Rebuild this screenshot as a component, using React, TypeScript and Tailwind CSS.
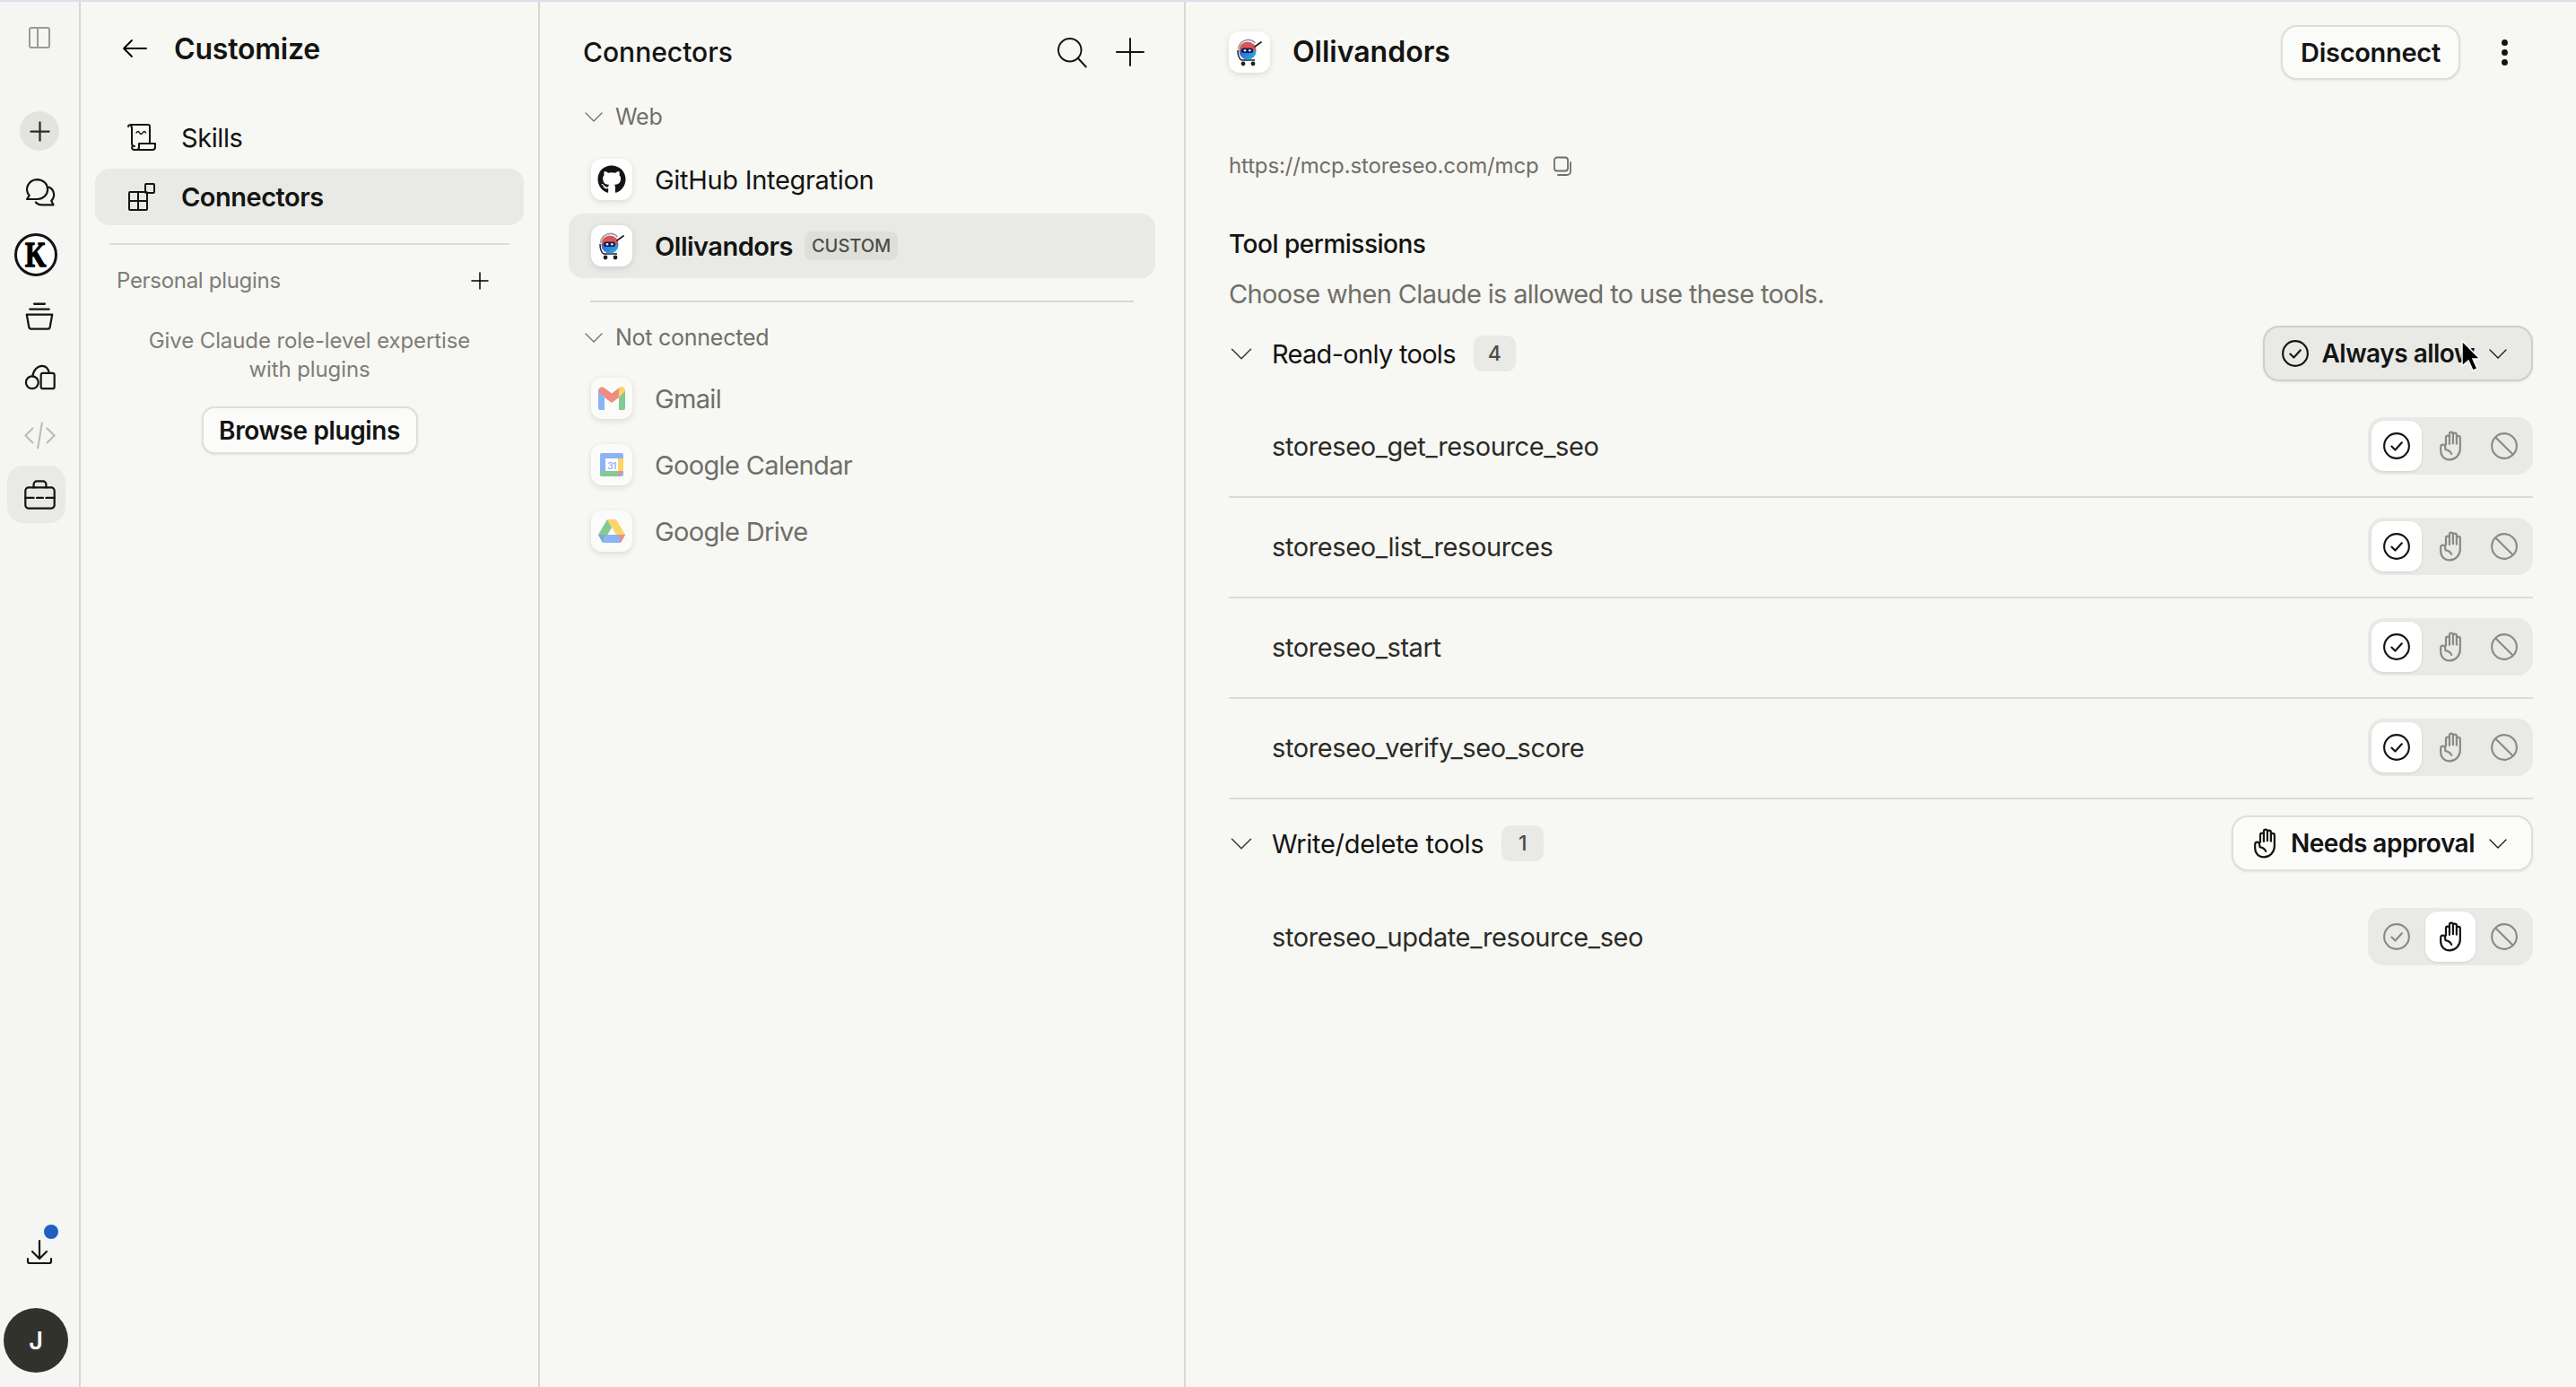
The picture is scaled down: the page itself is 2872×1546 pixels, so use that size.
import React from "react";
import { FaGithub } from "react-icons/fa";

const Stroke = ({ size = 30, box = 24, w = 1.7, className = "", children }: { size?: number; box?: number; w?: number; className?: string; children: React.ReactNode }) => (
  <svg width={size} height={size} viewBox={`0 0 ${box} ${box}`} fill="none" stroke="currentColor" strokeWidth={w} strokeLinecap="round" strokeLinejoin="round" className={className}>
    {children}
  </svg>
);

const Plus = ({ size = 30, w = 1.5 }: { size?: number; w?: number }) => (
  <Stroke size={size} w={w}><path d="M12 3v18M3 12h18" /></Stroke>
);

const Chevron = ({ size = 26 }: { size?: number }) => (
  <Stroke size={size} w={1.3}><path d="M3 8l9 9 9-9" /></Stroke>
);

const CheckCircle = ({ size = 32 }: { size?: number }) => (
  <Stroke size={size} w={1.6}>
    <circle cx="12" cy="12" r="10.4" />
    <path d="M7.8 12.4l3 3 5.6-6.2" />
  </Stroke>
);

const HandIcon = () => (
  <svg width="28" height="34" viewBox="2.2 1.2 16.2 22.3" fill="none" stroke="currentColor" strokeWidth="1.45" strokeLinecap="round" strokeLinejoin="round">
    <path d="M7 11.5V6.200a1.300 1.300 0 0 1 2.600 0V11M9.600 10.500V3.600a1.300 1.300 0 0 1 2.600 0v6.900M12.200 10.500V4.200a1.300 1.300 0 0 1 2.600 0v6.300M14.800 10.800V6.400a1.300 1.300 0 0 1 2.600 0V14.500a8 8 0 0 1-7.700 8C6 22.500 3.300 19.900 3.200 16v-3a1.600 1.600 0 0 1 3.200 0l.3 2c2 .3 3.600 1.300 4.400 3.200" />
  </svg>
);

const BlockIcon = ({ size = 32 }: { size?: number }) => (
  <Stroke size={size} w={1.6}>
    <circle cx="12" cy="12" r="10.4" />
    <path d="M4.800 4.800l14.400 14.400" />
  </Stroke>
);

const OllivandorsLogo = ({ size = 34 }: { size?: number }) => (
  <svg width={size} height={size} viewBox="0 0 34 34">
    <defs>
      <linearGradient id="ollBody" x1="0" y1="0" x2="1" y2="1">
        <stop offset="0" stopColor="#5a46b0" />
        <stop offset="0.55" stopColor="#2f7fe0" />
        <stop offset="1" stopColor="#27c0d8" />
      </linearGradient>
    </defs>
    <path d="M4.500 14a11 11 0 0 1 19-7" fill="none" stroke="#9a9a9a" strokeWidth="1.600" />
    <path d="M4 15c0 6 1 9 4 11h15" fill="none" stroke="#222" strokeWidth="1.500" />
    <circle cx="15" cy="16" r="9.500" fill="url(#ollBody)" />
    <path d="M5.500 15a9.500 9.500 0 0 1 19 0z" fill="#d9545a" />
    <rect x="8" y="12.500" width="13" height="5.500" rx="2.600" fill="#15204a" />
    <circle cx="12" cy="15.200" r="1.300" fill="#e8f0ff" />
    <circle cx="17.300" cy="15.200" r="1.300" fill="#e8f0ff" />
    <path d="M23 11l7-5" stroke="#222" strokeWidth="1.800" strokeLinecap="round" />
    <circle cx="10" cy="30" r="2.400" fill="#222" />
    <circle cx="21" cy="30" r="2.400" fill="#222" />
  </svg>
);

const GmailLogo = () => (
  <svg width="30" height="26" viewBox="0 0 30 26" className="opacity-60">
    <path d="M0 4v20a2 2 0 0 0 2 2h5V12z" fill="#4285f4" />
    <path d="M30 4v20a2 2 0 0 1-2 2h-5V12z" fill="#34a853" />
    <path d="M0 5c0-4 4-6 7-3.500l8 6 8-6c3-2.500 7-.5 7 3.500l-7 7-8 6-8-6z" fill="#ea4335" />
    <path d="M23 1.500c3-2 7-.5 7 3.500l-7 7z" fill="#fbbc04" />
  </svg>
);

const CalendarLogo = () => (
  <svg width="26" height="26" viewBox="0 0 26 26" className="opacity-60">
    <rect x="0" y="0" width="26" height="26" rx="2" fill="#4285f4" />
    <rect x="20" y="6" width="6" height="14" fill="#fbbc04" />
    <path d="M0 20h20v6H2a2 2 0 0 1-2-2z" fill="#34a853" />
    <path d="M20 20h6l-6 6z" fill="#ea4335" />
    <rect x="6" y="6" width="14" height="14" fill="#ffffff" />
    <text x="13" y="17.500" textAnchor="middle" fontSize="10" fontFamily="Inter, sans-serif" fontWeight="600" fill="#4285f4">31</text>
  </svg>
);

const DriveLogo = () => (
  <svg width="30" height="27" viewBox="0 0 30 27" className="opacity-60">
    <path d="M10 0h10l10 17h-10z" fill="#fbbc04" />
    <path d="M10 0L0 17l5 9 10-17z" fill="#34a853" />
    <path d="M5 26h20l5-9H10z" fill="#4285f4" />
    <path d="M25 26l5-9h-7z" fill="#ea4335" />
    <path d="M0 17l5 9 3-9z" fill="#2a6fd6" />
  </svg>
);

const LogoBox = ({ children, dim = false }: { children: React.ReactNode; dim?: boolean }) => (
  <div className={`flex h-[46px] w-[46px] shrink-0 items-center justify-center rounded-xl shadow-[0_2px_7px_rgba(0,0,0,0.12)] ${dim ? "bg-[#fbfbf9]" : "bg-white"}`}>
    {children}
  </div>
);

const RailSlot = ({ h, className = "", children }: { h: string; className?: string; children: React.ReactNode }) => (
  <div className={`flex w-full items-center justify-center ${h} ${className}`}>{children}</div>
);

const Rail = () => (
  <aside className="flex w-[90px] shrink-0 flex-col border-r-2 border-[#d8d8d3] bg-[#f5f5f3] text-[#141413]">
    <RailSlot h="h-[80px]" className="text-[#9b9b96]">
      <svg width="26" height="26" viewBox="0 0 26 26" fill="none" stroke="currentColor" strokeWidth="2">
        <rect x="2" y="2" width="22" height="22" rx="2" />
        <path d="M11 2v22" />
      </svg>
    </RailSlot>
    <RailSlot h="h-[64px]" className="mt-[32px]">
      <div className="flex h-[44px] w-[44px] items-center justify-center rounded-full bg-[#e4e4df] text-[#2b2b28]">
        <Plus size={27} w={2} />
      </div>
    </RailSlot>
    <RailSlot h="h-[72px]">
      <Stroke size={37} box={32} w={1.9}>
        <path d="M13.500 3.500a10 9.500 0 0 1 0 19H3.500l2.300-3.500A10 9.500 0 0 1 13.500 3.500z" />
        <path d="M25 11a8 8 0 0 1 2 13l2 4H18a8 8 0 0 1-6-2.500" />
      </Stroke>
    </RailSlot>
    <RailSlot h="h-[68px]">
      <div className="mr-2 flex h-[48px] w-[48px] items-center justify-center rounded-full border-[3px] border-[#141413] bg-white [font-family:'Liberation_Serif',serif] text-[40px] leading-none font-bold text-black">
        <span className="block scale-x-75 [-webkit-text-stroke:1.5px_black]">K</span>
      </div>
    </RailSlot>
    <RailSlot h="h-[70px]">
      <Stroke size={38} box={32} w={1.9}>
        <path d="M11 4h10M7 9h18M4 14h24l-2.200 12a2 2 0 0 1-2 1.500H8.200a2 2 0 0 1-2-1.500z" />
      </Stroke>
    </RailSlot>
    <RailSlot h="h-[64px]">
      <svg width="37" height="37" viewBox="0 2 32 32" fill="none" stroke="currentColor" strokeWidth="1.900" strokeLinecap="round" strokeLinejoin="round">
        <circle cx="8.500" cy="23" r="6" />
        <rect x="17" y="14" width="13" height="15" rx="2" />
        <path d="M9 17c.5-6 5-10 9-10 3 0 6 2 7 7" />
      </svg>
    </RailSlot>
    <RailSlot h="h-[66px]" className="text-[#bdbdb8]">
      <Stroke size={37} box={32} w={1.9}>
        <path d="M9 9l-7 7 7 7M23 9l7 7-7 7M18 4l-4 24" />
      </Stroke>
    </RailSlot>
    <RailSlot h="h-[66px]">
      <div className="mr-[7px] flex h-[64px] w-[65px] items-center justify-center rounded-[18px] bg-[#e9e9e5] pl-[7px]">
        <Stroke size={37} box={32} w={1.9}>
          <rect x="2" y="9" width="28" height="20" rx="3" />
          <path d="M10 9V6a3 3 0 0 1 3-3h6a3 3 0 0 1 3 3v3M2 19h8M13 19h6M22 19h8" />
        </Stroke>
      </div>
    </RailSlot>
    <div className="relative mt-auto flex h-[40px] w-full items-center justify-center">
      <Stroke size={30} box={30} w={2.2}>
        <path d="M15 2v20M7 14l8 8 8-8M2 22v3a2 2 0 0 0 2 2h22a2 2 0 0 0 2-2v-3" />
      </Stroke>
      <span className="absolute top-[-11px] left-[49px] h-[16px] w-[16px] rounded-full bg-[#1f5fc4]" />
    </div>
    <div className="mt-[42px] mb-[16px] flex w-full justify-center">
      <div className="mr-2 flex h-[72px] w-[72px] items-center justify-center rounded-full bg-[#32322d] text-[27px] font-semibold text-white">J</div>
    </div>
  </aside>
);

const Sidebar = () => (
  <section className="flex w-[512px] shrink-0 flex-col border-r-2 border-[#d8d8d3] px-4">
    <div className="flex h-[104px] items-center gap-[30px] pl-[30px]">
      <Stroke size={28} box={28} w={1.8}><path d="M27 14H2M11 5l-9 9 9 9" /></Stroke>
      <h1 className="pt-[1px] text-[32px] font-semibold tracking-[-0.2px] text-[#141413]">Customize</h1>
    </div>
    <div className="mt-[15px] mb-[4px] flex h-[63px] items-center gap-[28px] rounded-2xl pl-[36px] text-[29px] tracking-[-0.4px] text-[#141413]">
      <Stroke size={32} box={32} w={2}>
        <path d="M1 4c0-2 2-2 3-1l1 2v18a3 3 0 0 0 3 3M4 2h19a2 2 0 0 1 2 2v19M8 30a3 3 0 0 1-3-3M8 30h20a3 3 0 0 0 3-3v-4H13v4a3 3 0 0 1-3 3" />
        <path d="M10 11c1.500-2 2.500-2 3.500 0s2 2 3.500 0 2.500-2 3.500 0" strokeWidth="1.500" />
      </Stroke>
      <span className="pt-[2px]">Skills</span>
    </div>
    <div className="flex h-[63px] items-center gap-[28px] rounded-2xl bg-[#e9e9e5] pl-[36px] text-[29px] font-semibold tracking-[-0.5px] text-[#141413]">
      <Stroke size={32} box={32} w={2}>
        <rect x="2" y="10" width="20" height="20" rx="1" />
        <path d="M12 10v20M2 20h20" />
        <rect x="20" y="1" width="10" height="10" rx="1" />
      </Stroke>
      Connectors
    </div>
    <div className="mx-4 mt-[20px] h-[2px] bg-[#dcdcd7]" />
    <div className="mt-[20px] flex h-[40px] items-center justify-between pr-[37px] pl-6">
      <span className="text-[24px] tracking-[-0.3px] text-[#7d7d78]">Personal plugins</span>
      <Plus size={24} />
    </div>
    <p className="mt-[31px] text-center text-[24px] leading-[32px] tracking-[-0.1px] text-[#7d7d78]">
      Give Claude role-level expertise
      <br />
      with plugins
    </p>
    <button className="mt-[25px] h-[53px] w-[241px] self-center rounded-[14px] border-2 border-[#dededa] bg-[#fbfbf9] text-[28px] font-semibold tracking-[-0.4px] text-[#141413] shadow-[0_1px_3px_rgba(0,0,0,0.08)]">
      Browse plugins
    </button>
  </section>
);

const SectionLabel = ({ label }: { label: string }) => (
  <div className="flex h-[32px] items-center gap-[12px] pl-4 text-[25px] tracking-[-0.25px] text-[#6f6f69]">
    <Chevron size={24} />
    {label}
  </div>
);

const ConnectorRow = ({ logo, name, active = false, dim = false, badge }: { logo: React.ReactNode; name: string; active?: boolean; dim?: boolean; badge?: string }) => (
  <div className={`mb-[2px] flex h-[72px] items-center gap-[25px] rounded-2xl pl-[25px] text-[29px] ${active ? "bg-[#e9e9e5] font-semibold tracking-[-0.5px] text-[#141413]" : dim ? "tracking-[-0.65px] text-[#6f6f69]" : "tracking-[-0.3px] text-[#141413]"}`}>
    <LogoBox dim={dim}>{logo}</LogoBox>
    <span>{name}</span>
    {badge && (
      <span className="-ml-[12px] flex h-[32px] items-center rounded-lg bg-[#dfdfda] px-[8px] text-[20px] font-medium tracking-normal text-[#4d4d48]">
        {badge}
      </span>
    )}
  </div>
);

const ConnectorList = () => (
  <section className="flex w-[720px] shrink-0 flex-col border-r-2 border-[#d8d8d3] px-8">
    <div className="flex h-[112px] items-center justify-between pr-[10px] pl-4 text-[#141413]">
      <h2 className="text-[30px] font-medium">Connectors</h2>
      <div className="flex items-center gap-[29px]">
        <Stroke size={36} box={24} w={1.3}>
          <circle cx="10.500" cy="10.500" r="8.500" />
          <path d="M16.500 16.500l6 6.500" />
        </Stroke>
        <Stroke size={36} box={24} w={1.3}><path d="M12 2v20M2 12h20" /></Stroke>
      </div>
    </div>
    <SectionLabel label="Web" />
    <div className="mt-[18px]">
      <ConnectorRow logo={<FaGithub className="text-[32px] text-[#141413]" />} name="GitHub Integration" />
      <ConnectorRow logo={<OllivandorsLogo />} name="Ollivandors" active badge="CUSTOM" />
    </div>
    <div className="mx-6 mt-[23px] h-[2px] bg-[#d8d8d3]" />
    <div className="mt-[23px]">
      <SectionLabel label="Not connected" />
    </div>
    <div className="mt-[16px]">
      <ConnectorRow logo={<GmailLogo />} name="Gmail" dim />
      <ConnectorRow logo={<CalendarLogo />} name="Google Calendar" dim />
      <ConnectorRow logo={<DriveLogo />} name="Google Drive" dim />
    </div>
  </section>
);

const PermissionToggle = ({ mode }: { mode: "allow" | "ask" }) => {
  const slot = "flex h-[56px] w-[56px] items-center justify-center rounded-[14px]";
  const on = "bg-white text-[#141413] shadow-[0_1px_3px_rgba(0,0,0,0.1)]";
  const off = "text-[#8a8a85]";
  return (
    <div className="flex h-[64px] w-[184px] items-center gap-[4px] rounded-[18px] bg-[#e9e9e5] px-[4px]">
      <div className={`${slot} ${mode === "allow" ? on : off}`}><CheckCircle /></div>
      <div className={`${slot} ${mode === "ask" ? on : off}`}><HandIcon /></div>
      <div className={`${slot} ${off}`}><BlockIcon /></div>
    </div>
  );
};

const ToolRow = ({ name, mode, last = false }: { name: string; mode: "allow" | "ask"; last?: boolean }) => (
  <div className={`flex h-[112px] items-center justify-between pb-[2px] pl-[48px] text-[29px] tracking-[-0.4px] text-[#2b2b28] ${last ? "" : "border-b-2 border-[#dcdcd7]"}`}>
    <span>{name}</span>
    <PermissionToggle mode={mode} />
  </div>
);

const GroupHeader = ({ title, titleClass, count, icon, label, open = false, className = "" }: { title: string; titleClass: string; count: number; icon: React.ReactNode; label: string; open?: boolean; className?: string }) => (
  <div className={`flex h-[62px] items-center justify-between ${className}`}>
    <div className="flex items-center text-[29px] text-[#141413]">
      <Stroke size={28} box={24} w={1.3} className="text-[#3a3a36]"><path d="M3 8l9 9 9-9" /></Stroke>
      <span className={`ml-[20px] ${titleClass}`}>{title}</span>
      <span className="ml-[20px] flex h-[40px] w-[47px] items-center justify-center rounded-[10px] bg-[#e9e9e5] text-[23px] font-medium text-[#4d4d48]">{count}</span>
    </div>
    <div className={`flex h-[62px] items-center rounded-[18px] border-2 pr-[25px] pl-[18px] text-[28px] font-semibold tracking-[-0.5px] text-[#141413] shadow-[0_1px_3px_rgba(0,0,0,0.08)] ${open ? "border-[#cfcfca] bg-[#e9e9e5]" : "border-[#dededa] bg-[#fbfbf9]"}`}>
      {icon}
      <span className="mr-[14px] ml-[13px]">{label}</span>
      <Chevron size={24} />
    </div>
  </div>
);

const Detail = () => (
  <section className="relative flex min-w-0 flex-1 flex-col px-12">
    <div className="flex h-[112px] items-center">
      <LogoBox><OllivandorsLogo /></LogoBox>
      <h2 className="ml-[25px] text-[32px] font-semibold text-[#141413]">Ollivandors</h2>
      <button className="ml-auto h-[61px] w-[200px] rounded-[18px] border-2 border-[#dededa] bg-[#fbfbf9] text-[29px] font-semibold tracking-[-0.3px] text-[#141413] shadow-[0_1px_3px_rgba(0,0,0,0.08)]">
        Disconnect
      </button>
      <div className="mr-[28px] ml-[46px] flex flex-col gap-[4px]">
        <span className="h-[7px] w-[7px] rounded-full bg-[#141413]" />
        <span className="h-[7px] w-[7px] rounded-full bg-[#141413]" />
        <span className="h-[7px] w-[7px] rounded-full bg-[#141413]" />
      </div>
    </div>
    <div className="mt-[54px] flex h-[34px] items-center gap-[14px] text-[24px] tracking-[-0.15px] text-[#6f6f69]">
      https://mcp.storeseo.com/mcp
      <Stroke size={24} box={24} w={1.8}>
        <rect x="3" y="2.500" width="15" height="15" rx="3" />
        <path d="M21 8v10a4 4 0 0 1-4 4H7" />
      </Stroke>
    </div>
    <h3 className="mt-[50px] flex h-[40px] items-center text-[28px] font-medium tracking-[-0.5px] text-[#141413]">Tool permissions</h3>
    <p className="mt-[15px] flex h-[40px] items-center text-[29px] tracking-[-0.65px] text-[#6f6f69]">Choose when Claude is allowed to use these tools.</p>
    <GroupHeader className="mt-[16px]" title="Read-only tools" titleClass="tracking-[-0.7px]" count={4} icon={<CheckCircle />} label="Always allow" open />
    <div className="mt-[18px]">
      <ToolRow name="storeseo_get_resource_seo" mode="allow" />
      <ToolRow name="storeseo_list_resources" mode="allow" />
      <ToolRow name="storeseo_start" mode="allow" />
      <ToolRow name="storeseo_verify_seo_score" mode="allow" />
    </div>
    <GroupHeader
      className="mt-[18px]"
      title="Write/delete tools"
      titleClass="tracking-[-0.3px]"
      count={1}
      icon={<span className="mr-[2px] ml-[3px]"><HandIcon /></span>}
      label="Needs approval"
    />
    <div className="mt-[18px]">
      <ToolRow name="storeseo_update_resource_seo" mode="ask" last />
    </div>
    {/* pointer caught in the capture */}
    <svg className="absolute top-[376px] left-[1421px]" width="22" height="38" viewBox="0 0 22 38">
      <path d="M2 2v28l7-6 5 11 5-2-5-11h8z" fill="#000" stroke="#fff" strokeWidth="1.500" />
    </svg>
  </section>
);

export default function App() {
  return (
    <div className="flex h-screen w-screen overflow-hidden border-t-2 border-[#e3dcea] bg-[#f7f7f3] [font-family:Inter,sans-serif] leading-none">
      <Rail />
      <Sidebar />
      <ConnectorList />
      <Detail />
    </div>
  );
}
